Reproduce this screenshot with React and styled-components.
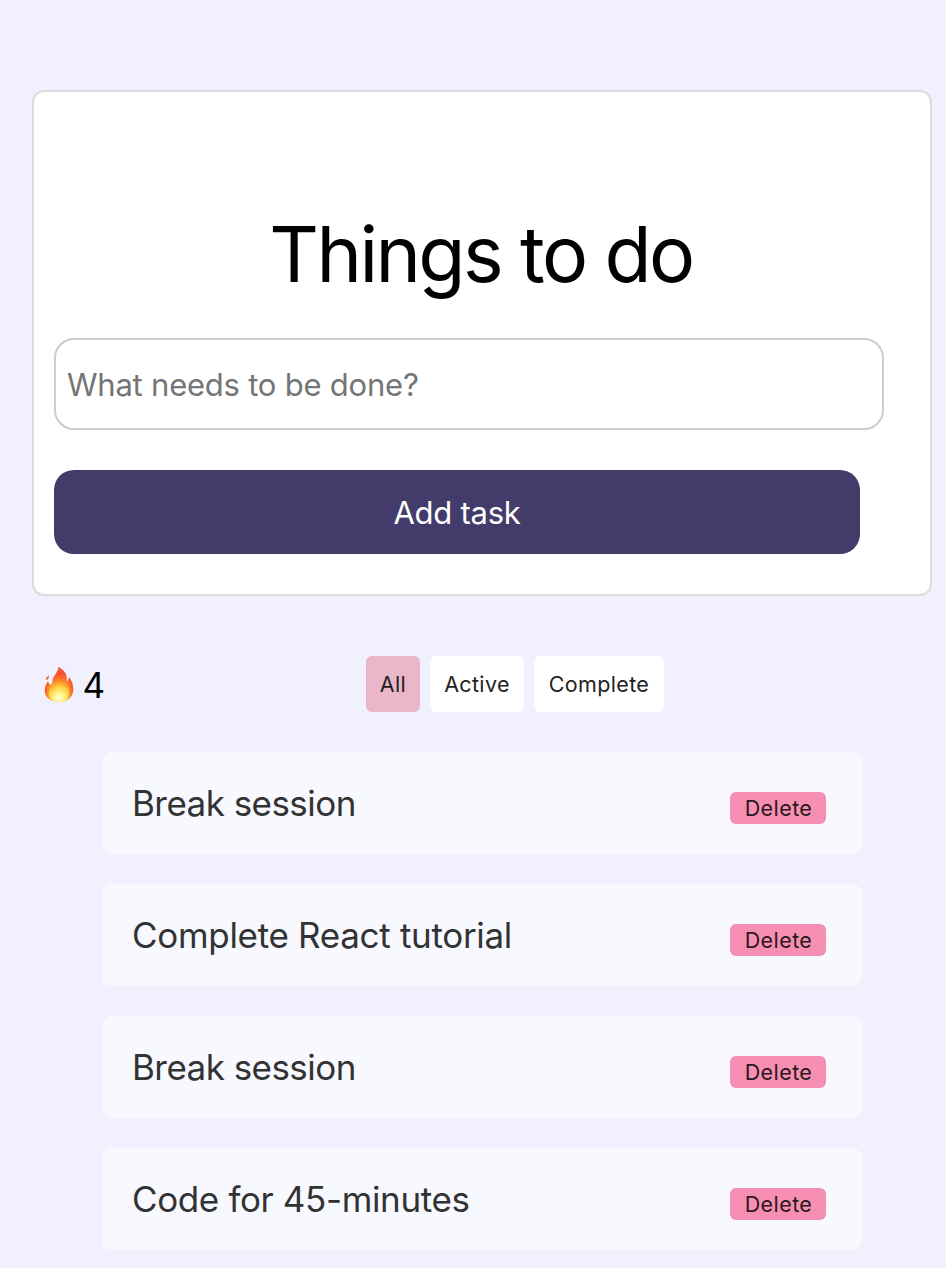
import React, { useState } from "react";
import styled, { createGlobalStyle } from "styled-components";

const GlobalStyle = createGlobalStyle`
  *, *::before, *::after { box-sizing: border-box; }
  body {
    margin: 0;
    background: #f0f0ff;
    font-family: Inter, "Liberation Sans", sans-serif;
    color: #000;
    overflow: hidden;
  }
  button, input { font-family: inherit; margin: 0; }
`;

const Page = styled.main`
  width: 946px;
  height: 1268px;
  padding: 90px 14px 0 32px;
  overflow: hidden;
`;

const Card = styled.form`
  display: flex;
  flex-direction: column;
  align-items: flex-start;
  height: 506px;
  padding: 114px 20px 0;
  background: #fff;
  border: 2px solid #dcdcdc;
  border-radius: 12px;
`;

const Title = styled.h1`
  align-self: stretch;
  height: 96px;
  margin: 0 0 36px;
  text-align: center;
  font-size: 77px;
  line-height: 96px;
  font-weight: 400;
  letter-spacing: -2.6px;
  text-indent: -2px;
  white-space: nowrap;
`;

const TaskInput = styled.input`
  width: 830px;
  height: 92px;
  padding: 0 11px;
  border: 2px solid #ccc;
  border-radius: 20px;
  background: #fff;
  font-size: 31px;
  letter-spacing: -0.22px;
  &::placeholder { color: #757575; opacity: 1; }
`;

const AddButton = styled.button`
  width: 806px;
  height: 84px;
  margin-top: 40px;
  padding: 0;
  border: 0;
  border-radius: 20px;
  background: #433c6a;
  color: #fff;
  font-size: 31px;
  letter-spacing: -0.25px;
`;

const Toolbar = styled.div`
  display: flex;
  align-items: center;
  height: 56px;
  margin-top: 60px;
`;

const Streak = styled.div`
  display: flex;
  align-items: center;
  width: 334px;
  height: 56px;
  padding: 0 0 0 12px;
  font-size: 35px;
  line-height: 56px;
`;

const Count = styled.span`
  margin: 1px 0 0 8.5px;
`;

const Filters = styled.div`
  display: flex;
  gap: 10px;
`;

const FilterButton = styled.button`
  width: ${(p) => p.$width}px;
  height: 56px;
  padding: 0;
  border: 0;
  border-radius: 6px;
  background: ${(p) => (p.$active ? "#e9b7c9" : "#fff")};
  color: #222;
  font-size: 21.5px;
  letter-spacing: 0.35px;
`;

const TaskList = styled.ul`
  display: flex;
  flex-direction: column;
  gap: 30px;
  width: 760px;
  margin: 40px 0 0 70px;
  padding: 0;
  list-style: none;
`;

const TaskRow = styled.li`
  display: flex;
  align-items: center;
  justify-content: space-between;
  height: 102px;
  padding: 0 36px 0 30px;
  border-radius: 10px;
  background: #f8f9ff;
`;

const TaskName = styled.span`
  color: #333;
  font-size: 35px;
  line-height: 44px;
  letter-spacing: ${(p) => p.$tracking}px;
  white-space: nowrap;
`;

const DeleteButton = styled.button`
  width: 96px;
  height: 32px;
  margin-top: 10px;
  padding: 0 0 0 1px;
  border: 0;
  border-radius: 6px;
  background: #f78fb3;
  color: #2b1820;
  font-size: 21.5px;
  line-height: 32px;
  letter-spacing: 0.42px;
`;

const Fire = () => (
  <svg width="30" height="37" viewBox="0 0 30 37" aria-hidden="true">
    <defs>
      <radialGradient id="flame" gradientUnits="userSpaceOnUse" cx="15" cy="31" r="29">
        <stop offset="0" stopColor="#fff9b8" />
        <stop offset="0.22" stopColor="#ffe45c" />
        <stop offset="0.42" stopColor="#ffb133" />
        <stop offset="0.62" stopColor="#ff7529" />
        <stop offset="0.82" stopColor="#f9502f" />
        <stop offset="1" stopColor="#f0604c" />
      </radialGradient>
      <linearGradient id="rim" x1="0" y1="0" x2="1" y2="0">
        <stop offset="0" stopColor="#f4441f" stopOpacity="0.8" />
        <stop offset="0.25" stopColor="#fb6a28" stopOpacity="0" />
        <stop offset="0.75" stopColor="#fb6a28" stopOpacity="0" />
        <stop offset="1" stopColor="#f4441f" stopOpacity="0.8" />
      </linearGradient>
      <radialGradient id="core" gradientUnits="userSpaceOnUse" cx="15" cy="32" r="17">
        <stop offset="0" stopColor="#fffde0" />
        <stop offset="0.35" stopColor="#fff07a" />
        <stop offset="0.7" stopColor="#ffcb3c" stopOpacity="0.8" />
        <stop offset="1" stopColor="#ffa030" stopOpacity="0.4" />
      </radialGradient>
      <path id="body" d="M14.3.7C19.200 3.100 23 7.500 22.700 12.500C22.500 14.500 22.900 15.500 23.600 15C24.700 14.200 24.500 12.700 25 11C27.600 14.500 29.300 18.500 29.200 23.500C29 31.200 23.500 36 15 36C6.500 36 .9 31.400.8 24.500C.8 20.500 2.500 17.500 4 15.200C4.700 17.200 5.300 18.500 6.500 18.500C8.600 18.500 7.800 15 9.200 11.700C10.900 8 14.500 5.500 14.300.7Z" />
    </defs>
    <use href="#body" fill="url(#flame)" />
    <use href="#body" fill="url(#rim)" />
    <path fill="#f4603f" d="M4.900 9.200C5.400 11.200 4.400 12.500 3.500 13.500C2.300 14.500 1.500 13.300 2 12.200C2.500 11 4 10.600 4.900 9.200Z" />
    <path fill="url(#core)" d="M16 14.500C19 17 18.900 19.500 20 21C21.200 22.300 22.500 21 23.300 19.500C25.200 22 26 24.500 25.400 27.500C24.600 32.700 20.800 35.500 15 35.500C9 35.500 4.700 32.500 4.600 27.500C4.600 25.500 5.100 24 5.900 22.900C6.900 24.500 8.300 25.200 9.600 24.400C12.500 22.600 11.500 20 13 17.500C13.900 16.200 15.600 16 16 14.500Z" />
  </svg>
);

const filters = [
  { name: "All", width: 54 },
  { name: "Active", width: 94 },
  { name: "Complete", width: 130 },
];

const initialTasks = [
  { id: 1, name: "Break session", tracking: -0.55 },
  { id: 2, name: "Complete React tutorial", tracking: -0.31 },
  { id: 3, name: "Break session", tracking: -0.55 },
  { id: 4, name: "Code for 45-minutes", tracking: -0.37 },
];

export default function App() {
  const [tasks, setTasks] = useState(initialTasks);
  const [filter, setFilter] = useState("All");
  const [draft, setDraft] = useState("");

  const addTask = (event) => {
    event.preventDefault();
    if (!draft.trim()) return;
    setTasks([...tasks, { id: Date.now(), name: draft.trim(), tracking: -0.4 }]);
    setDraft("");
  };

  return (
    <>
      <GlobalStyle />
      <Page>
        <Card onSubmit={addTask}>
          <Title>Things to do</Title>
          <TaskInput
            value={draft}
            onChange={(e) => setDraft(e.target.value)}
            placeholder="What needs to be done?"
          />
          <AddButton type="submit">Add task</AddButton>
        </Card>
        <Toolbar>
          <Streak>
            <Fire />
            <Count>{tasks.length}</Count>
          </Streak>
          <Filters>
            {filters.map((f) => (
              <FilterButton
                key={f.name}
                $width={f.width}
                $active={filter === f.name}
                onClick={() => setFilter(f.name)}
              >
                {f.name}
              </FilterButton>
            ))}
          </Filters>
        </Toolbar>
        <TaskList>
          {tasks.map((task) => (
            <TaskRow key={task.id}>
              <TaskName $tracking={task.tracking}>{task.name}</TaskName>
              <DeleteButton onClick={() => setTasks(tasks.filter((t) => t.id !== task.id))}>
                Delete
              </DeleteButton>
            </TaskRow>
          ))}
        </TaskList>
      </Page>
    </>
  );
}
